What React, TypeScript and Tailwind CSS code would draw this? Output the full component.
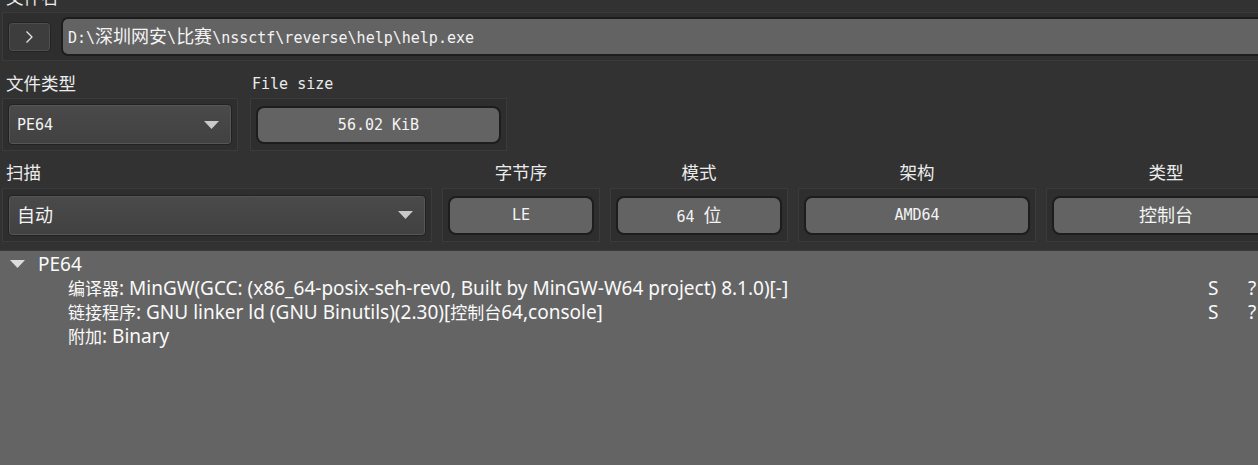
import React from 'react';

const CJK_RE = /([\u4e00-\u9fff]+)/;

// mixed text: latin runs in the parent font, CJK runs in a fixed-size CJK face
function Mixed({ text, cjk = 'text-[17px]' }: { text: string; cjk?: string }) {
    const parts = text.split(CJK_RE).filter(Boolean);
    return (
        <span className="whitespace-pre">
            {parts.map((p, i) =>
                CJK_RE.test(p) ? (
                    <span key={i} className={`font-['Noto_Sans_CJK_SC',sans-serif] ${cjk}`}>
                        {p}
                    </span>
                ) : (
                    <span key={i}>{p}</span>
                )
            )}
        </span>
    );
}

function Frame({ className = '', children }: { className?: string; children: React.ReactNode }) {
    return (
        <div className={`border border-[#3b3b3b] bg-[#2e2e2e] flex items-center px-[5px] ${className}`}>
            {children}
        </div>
    );
}

function Dropdown({ value }: { value: string }) {
    return (
        <div className="flex-1 h-[41px] rounded-[4px] border border-[#222] bg-gradient-to-b from-[#4a4a4a] to-[#414141] shadow-[inset_0_0_0_1px_#565656] flex items-center pl-[8px] pr-[12px]">
            <span className="flex-1 leading-[20px]">
                <Mixed text={value} cjk="text-[18px]" />
            </span>
            <svg width="15" height="8" viewBox="0 0 15 8">
                <polygon points="0,0 15,0 7.5,8" fill="#c9c9c9" />
            </svg>
        </div>
    );
}

function Value({ value, h = 'h-[39px]' }: { value: string; h?: string }) {
    return (
        <div className={`flex-1 ${h} rounded-[8px] border-2 border-[#1d1d1d] bg-[#636363] flex items-center justify-center leading-[20px]`}>
            <Mixed text={value} cjk="text-[18px]" />
        </div>
    );
}

const labelCls = "h-[24px] leading-[24px] font-['Noto_Sans_CJK_SC',sans-serif] text-[17.5px] text-[#ececec] whitespace-nowrap";

const rows = [
    '编译器: MinGW(GCC: (x86_64-posix-seh-rev0, Built by MinGW-W64 project) 8.1.0)[-]',
    '链接程序: GNU linker ld (GNU Binutils)(2.30)[控制台64,console]',
    '附加: Binary',
];

export default function App() {
    return (
        <div className="w-[1258px] h-[465px] bg-[#323232] overflow-hidden flex flex-col text-[#f4f4f4] font-['DejaVu_Sans_Mono','Noto_Sans_CJK_SC',monospace] text-[15px]">
            {/* 文件名 label, scrolled mostly out of view */}
            <div className="h-[12px] overflow-hidden pl-[6px]">
                <div className={`mt-[-15px] ${labelCls}`}>文件名</div>
            </div>

            {/* path */}
            <Frame className="ml-[2px] mr-[-20px] h-[49px] gap-[10px]">
                <div className="w-[43px] h-[30px] shrink-0 rounded-[4px] border border-[#242424] bg-[#3d3d3d] shadow-[inset_0_0_0_1px_#4e4e4e] flex items-center justify-center">
                    <svg width="9" height="14" viewBox="0 0 9 14">
                        <polyline points="1.5,1.5 7,7 1.5,12.5" fill="none" stroke="#e4e4e4" strokeWidth="1.3" />
                    </svg>
                </div>
                <div className="flex-1 h-[39px] rounded-[7px] border-2 border-[#1d1d1d] bg-[#636363] flex items-center pl-[5px] leading-[20px]">
                    <Mixed text="D:\深圳网安\比赛\nssctf\reverse\help\help.exe" cjk="text-[18px]" />
                </div>
            </Frame>

            {/* type / size */}
            <div className="mt-[10px] flex gap-[12px] pl-[2px]">
                <div className="w-[236px] shrink-0 flex flex-col">
                    <div className={`${labelCls} pl-[4px] mb-[3px]`}>文件类型</div>
                    <Frame className="h-[53px]">
                        <Dropdown value="PE64" />
                    </Frame>
                </div>
                <div className="w-[257px] shrink-0 flex flex-col">
                    <div className="h-[24px] leading-[26px] pl-[2px] mb-[3px] text-[#ececec]">File size</div>
                    <Frame className="h-[53px]">
                        <Value value="56.02 KiB" h="h-[38px]" />
                    </Frame>
                </div>
            </div>

            {/* scan row */}
            <div className="mt-[9px] flex gap-[10px] pl-[2px]">
                <div className="w-[430px] shrink-0 flex flex-col">
                    <div className={`${labelCls} pl-[4px] mb-[4px]`}>扫描</div>
                    <Frame className="h-[54px]">
                        <Dropdown value="自动" />
                    </Frame>
                </div>
                {[
                    { label: '字节序', value: 'LE', w: 'w-[158px]' },
                    { label: '模式', value: '64 位', w: 'w-[178px]' },
                    { label: '架构', value: 'AMD64', w: 'w-[238px]' },
                    { label: '类型', value: '控制台', w: 'w-[240px]' },
                ].map((c) => (
                    <div key={c.label} className={`${c.w} shrink-0 flex flex-col`}>
                        <div className={`${labelCls} text-center mb-[4px]`}>{c.label}</div>
                        <Frame className="h-[54px]">
                            <Value value={c.value} />
                        </Frame>
                    </div>
                ))}
            </div>

            {/* result tree */}
            <div className="mt-[8px] flex-1 bg-[#646464] border-t border-[#3a3a3a] pt-px font-['Noto_Sans','Noto_Sans_CJK_SC',sans-serif] text-[19px] text-[#fafafa]">
                <div className="h-[24px] flex items-center pl-[10px]">
                    <svg width="15" height="8" viewBox="0 0 15 8" className="mr-[13px]">
                        <polygon points="0,0 15,0 7.5,8" fill="#dcdcdc" />
                    </svg>
                    <span className="leading-[24px]">PE64</span>
                </div>
                {rows.map((r, i) => (
                    <div key={i} className="h-[24px] flex items-center w-[1280px] whitespace-nowrap leading-[24px]">
                        <div className="w-[1208px] shrink-0 pl-[68px]">
                            <Mixed text={r} />
                        </div>
                        <div className="w-[40px] shrink-0">{i < 2 ? 'S' : ''}</div>
                        <div>{i < 2 ? '?' : ''}</div>
                    </div>
                ))}
            </div>
        </div>
    );
}
